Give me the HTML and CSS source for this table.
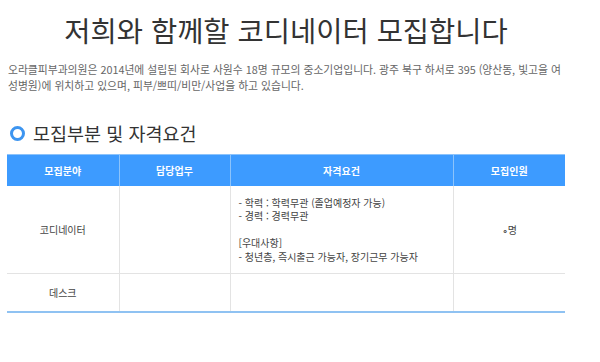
FILE: index.html
```html
<!DOCTYPE html>
<html lang="ko">
<head>
<meta charset="utf-8">
<link rel="stylesheet" href="styles.css">
</head>
<body>
<div class="page">
  <h1 class="title">저희와 함께할 코디네이터 모집합니다</h1>
  <p class="intro">오라클피부과의원은 2014년에 설립된 회사로 사원수 18명 규모의 중소기업입니다. 광주 북구 하서로 395 (양산동, 빛고을 여<br>성병원)에 위치하고 있으며, 피부/쁘띠/비만/사업을 하고 있습니다.</p>
  <h2 class="section"><span class="ring"></span>모집부분 및 자격요건</h2>
  <table class="jobs">
    <colgroup>
      <col class="c1"><col class="c2"><col class="c3"><col class="c4">
    </colgroup>
    <thead>
      <tr><th>모집분야</th><th>담당업무</th><th>자격요건</th><th>모집인원</th></tr>
    </thead>
    <tbody>
      <tr class="r1">
        <td>코디네이터</td>
        <td></td>
        <td class="req">- 학력 : 학력무관 (졸업예정자 가능)<br>- 경력 : 경력무관<br><br>[우대사항]<br>- 청년층, 즉시출근 가능자, 장기근무 가능자</td>
        <td>∘명</td>
      </tr>
      <tr class="r2">
        <td>데스크</td>
        <td></td>
        <td></td>
        <td></td>
      </tr>
    </tbody>
  </table>
</div>
</body>
</html>
```
FILE: styles.css
```css
html, body {
  margin: 0;
  padding: 0;
  background: #fff;
}
body {
  font-family: "Noto Sans CJK KR", "Noto Sans", sans-serif;
  color: #555;
}
.page {
  width: 558px;
  padding: 0 0 0 7px;
}
.title {
  margin: 0;
  padding-top: 12px;
  height: 42px;
  text-align: center;
  font-size: 28.5px;
  font-weight: 400;
  line-height: 36px;
  color: #333;
}
.intro {
  margin: 7px 0 0 1px;
  font-size: 10.8px;
  line-height: 16px;
  color: #666;
  letter-spacing: 0;
  white-space: nowrap;
}
.section {
  margin: 27px 0 0 0;
  display: flex;
  align-items: center;
  gap: 8px;
  font-size: 18.5px;
  font-weight: 400;
  line-height: 26px;
  color: #333;
  padding-left: 3px;
}
.ring {
  width: 9px;
  height: 9px;
  border: 3px solid #3d95f0;
  border-radius: 50%;
}
.jobs {
  margin-top: 8px;
  width: 558px;
  border-collapse: collapse;
  table-layout: fixed;
  font-size: 10px;
  color: #444;
}
.c1 { width: 112px; }
.c2 { width: 111px; }
.c3 { width: 223px; }
.c4 { width: 112px; }
.jobs th {
  height: 31px;
  padding: 0;
  background: #3d9bff;
  color: #fff;
  font-weight: 700;
  border-top: 1px solid #8cc3fb;
  border-left: 1px solid #8cc3fb;
}
.jobs th:first-child { border-left: none; }
.jobs td {
  padding: 0;
  text-align: center;
  vertical-align: middle;
  border-left: 1px solid #e3e3e3;
  border-bottom: 1px solid #e3e3e3;
}
.jobs td:first-child { border-left: none; }
.r1 td { height: 87px; }
.r2 td { height: 37px; border-bottom: 2px solid #8fc2f2; }
.jobs td.req {
  text-align: left;
  padding-left: 8px;
  line-height: 13.4px;
}
```
